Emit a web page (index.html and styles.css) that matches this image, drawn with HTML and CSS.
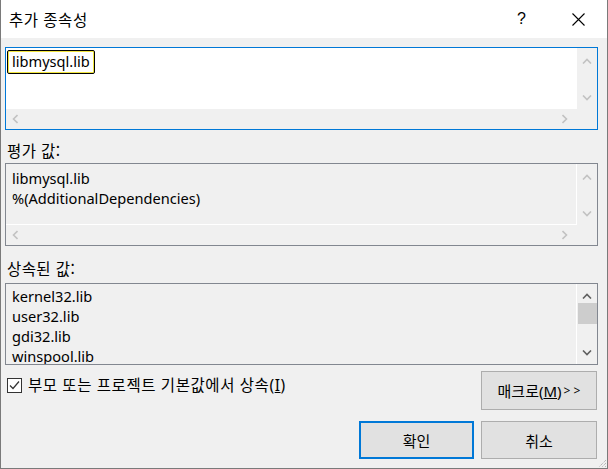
FILE: index.html
```html
<!DOCTYPE html>
<html lang="ko">
<head>
<meta charset="utf-8">
<title>추가 종속성</title>
<link rel="stylesheet" href="styles.css">
</head>
<body>
<div class="window">
  <div class="titlebar">
    <span class="title">추가 종속성</span>
    <span class="help">?</span>
    <span class="close">
      <svg width="13" height="13" viewBox="0 0 13 13"><path d="M0.5 0.5 L12.5 12.5 M12.5 0.5 L0.5 12.5" stroke="#000" stroke-width="1.1" fill="none"/></svg>
    </span>
  </div>
  <div class="body">
    <div class="box box-edit">
      <div class="content white">
        <span class="chip">libmysql.lib</span>
      </div>
      <div class="vscroll">
        <svg class="arr" width="10" height="6" viewBox="0 0 10 6"><path d="M1 5.5 L5 1.5 L9 5.5" stroke="#c2c2c2" stroke-width="1.6" fill="none"/></svg>
        <svg class="arr" width="10" height="6" viewBox="0 0 10 6"><path d="M1 0.5 L5 4.5 L9 0.5" stroke="#c2c2c2" stroke-width="1.6" fill="none"/></svg>
      </div>
      <div class="hscroll">
        <svg class="arr" width="6" height="10" viewBox="0 0 6 10"><path d="M5.5 1 L1.5 5 L5.5 9" stroke="#c2c2c2" stroke-width="1.6" fill="none"/></svg>
        <svg class="arr" width="6" height="10" viewBox="0 0 6 10"><path d="M0.5 1 L4.5 5 L0.5 9" stroke="#c2c2c2" stroke-width="1.6" fill="none"/></svg>
      </div>
      <div class="corner"></div>
    </div>

    <div class="label label-first">평가 값:</div>

    <div class="box box-ro">
      <div class="content sep">
        <div class="line">libmysql.lib</div>
        <div class="line">%(AdditionalDependencies)</div>
      </div>
      <div class="vscroll">
        <svg class="arr" width="10" height="6" viewBox="0 0 10 6"><path d="M1 5.5 L5 1.5 L9 5.5" stroke="#c2c2c2" stroke-width="1.6" fill="none"/></svg>
        <svg class="arr" width="10" height="6" viewBox="0 0 10 6"><path d="M1 0.5 L5 4.5 L9 0.5" stroke="#c2c2c2" stroke-width="1.6" fill="none"/></svg>
      </div>
      <div class="hscroll">
        <svg class="arr" width="6" height="10" viewBox="0 0 6 10"><path d="M5.5 1 L1.5 5 L5.5 9" stroke="#c2c2c2" stroke-width="1.6" fill="none"/></svg>
        <svg class="arr" width="6" height="10" viewBox="0 0 6 10"><path d="M0.5 1 L4.5 5 L0.5 9" stroke="#c2c2c2" stroke-width="1.6" fill="none"/></svg>
      </div>
      <div class="corner"></div>
    </div>

    <div class="label label-second">상속된 값:</div>

    <div class="box box-list">
      <div class="content list">
        <div class="line">kernel32.lib</div>
        <div class="line">user32.lib</div>
        <div class="line">gdi32.lib</div>
        <div class="line">winspool.lib</div>
        <div class="line">comdlg32.lib</div>
      </div>
      <div class="vscroll vscroll-active">
        <svg class="arr" width="10" height="6" viewBox="0 0 10 6"><path d="M1 5.5 L5 1.5 L9 5.5" stroke="#606060" stroke-width="1.6" fill="none"/></svg>
        <div class="thumb"></div>
        <svg class="arr" width="10" height="6" viewBox="0 0 10 6"><path d="M1 0.5 L5 4.5 L9 0.5" stroke="#606060" stroke-width="1.6" fill="none"/></svg>
      </div>
    </div>

    <div class="options">
      <label class="check">
        <span class="checkbox">
          <svg width="11" height="11" viewBox="0 0 11 11"><path d="M1 5.5 L4 8.5 L10 1.5" stroke="#333" stroke-width="1.2" fill="none"/></svg>
        </span>
        <span class="check-text">부모 또는 프로젝트 기본값에서 상속(<u>I</u>)</span>
      </label>
      <button class="btn btn-macro">매크로(<u>M</u>)<span class="gt">&gt; &gt;</span></button>
    </div>

    <div class="actions">
      <button class="btn btn-ok">확인</button>
      <button class="btn">취소</button>
    </div>
  </div>
  <svg class="grip" width="9" height="9" viewBox="0 0 9 9">
    <path d="M8 1 L1 8 M8 4 L4 8 M8 7 L7 8" stroke="#a0a0a0" stroke-width="1" stroke-dasharray="1 1" fill="none"/>
  </svg>
</div>
</body>
</html>
```

FILE: styles.css
```css
* { box-sizing: border-box; }

html, body {
  margin: 0;
  padding: 0;
  background: #f0f0f0;
}

body {
  font-family: "Noto Sans", "Noto Sans CJK KR", sans-serif;
  font-size: 14.6px;
  color: #000;
}

.window {
  position: relative;
  width: 608px;
  height: 469px;
  background: #f0f0f0;
  border: 1px solid #7a7a7a;
  border-top: none;
  display: flex;
  flex-direction: column;
}

.titlebar {
  height: 38px;
  background: #fff;
  display: flex;
  align-items: center;
  padding-left: 8px;
  flex: none;
}

.title {
  flex: 1;
  font-family: "Noto Sans CJK KR", sans-serif;
  font-size: 15.5px;
  letter-spacing: 0.5px;
  line-height: 20px;
}

.help {
  width: 55px;
  font-family: "Liberation Sans", sans-serif;
  font-size: 16px;
  line-height: 20px;
  text-align: left;
}

.close {
  width: 35px;
  display: flex;
  align-items: center;
}

.body {
  flex: 1;
  padding: 9px 9px 0 4px;
  display: flex;
  flex-direction: column;
}

.box {
  height: 83px;
  border: 1px solid #828790;
  background: #f0f0f0;
  display: grid;
  grid-template-columns: 1fr 20px;
  grid-template-rows: 1fr 20px;
  flex: none;
}

.box-edit {
  border-color: #0078d7;
}

.box-list {
  height: 82px;
  grid-template-rows: 1fr;
}

.content {
  overflow: hidden;
  padding: 4px 0 0 6px;
}

.white {
  background: #fff;
  padding: 2px 0 0 1px;
}

.sep {
  border-right: 1px solid #fff;
  border-bottom: 1px solid #fff;
}

.list {
  border-right: 1px solid #fff;
  padding-top: 2px;
}

.line {
  line-height: 20px;
  height: 20px;
  white-space: nowrap;
}

.chip {
  display: inline-block;
  height: 24px;
  line-height: 21px;
  padding: 0 4px;
  border: 1px solid #000;
  border-radius: 2px;
  background: #fff;
  box-shadow: inset 0 0 0 1px #f2e640;
}

.vscroll {
  display: flex;
  flex-direction: column;
  align-items: center;
  justify-content: space-between;
  padding: 10px 0 8px;
}

.vscroll-active {
  padding: 9px 0 8px;
  justify-content: flex-start;
}

.vscroll-active .thumb {
  width: 19px;
  height: 21px;
  background: #cdcdcd;
  margin: 4px 0 0 1px;
}

.vscroll-active .arr:last-child {
  margin-top: auto;
}

.hscroll {
  display: flex;
  align-items: center;
  justify-content: space-between;
  padding: 0 9px 0 6px;
}

.arr {
  display: block;
  flex: none;
}

.label {
  font-family: "Noto Sans CJK KR", sans-serif;
  font-size: 15.5px;
  letter-spacing: 0.4px;
  line-height: 20px;
  padding-left: 2px;
  flex: none;
}

.label-first {
  height: 33px;
  padding-top: 10px;
}

.label-second {
  height: 37px;
  padding-top: 12px;
}

.options {
  display: flex;
  justify-content: space-between;
  align-items: flex-start;
  margin-top: 6px;
  padding-right: 1px;
  flex: none;
}

.check {
  display: flex;
  align-items: center;
  height: 24px;
  margin-top: 2px;
  padding-left: 2px;
  gap: 6px;
}

.checkbox {
  width: 15px;
  height: 15px;
  border: 1px solid #333;
  background: #fff;
  display: flex;
  align-items: center;
  justify-content: center;
}

.check-text {
  font-size: 15.5px;
  letter-spacing: 0.6px;
  line-height: 24px;
}

.check-text u {
  text-decoration-thickness: 1px;
}

.btn {
  font-family: "Noto Sans", "Noto Sans CJK KR", sans-serif;
  font-size: 15px;
  color: #000;
  width: 116px;
  height: 38px;
  background: #e1e1e1;
  border: 1px solid #adadad;
  padding: 0;
  display: flex;
  align-items: center;
  justify-content: center;
}

.btn-macro {
  height: 39px;
}

.btn-macro .gt {
  font-size: 12px;
  margin-left: 2px;
}

.actions {
  display: flex;
  justify-content: flex-end;
  gap: 7px;
  margin-top: 11px;
  padding-right: 1px;
  flex: none;
}

.btn-ok {
  width: 115px;
  border: 2px solid #0078d7;
}

.grip {
  position: absolute;
  right: 0;
  bottom: 0;
}
```
